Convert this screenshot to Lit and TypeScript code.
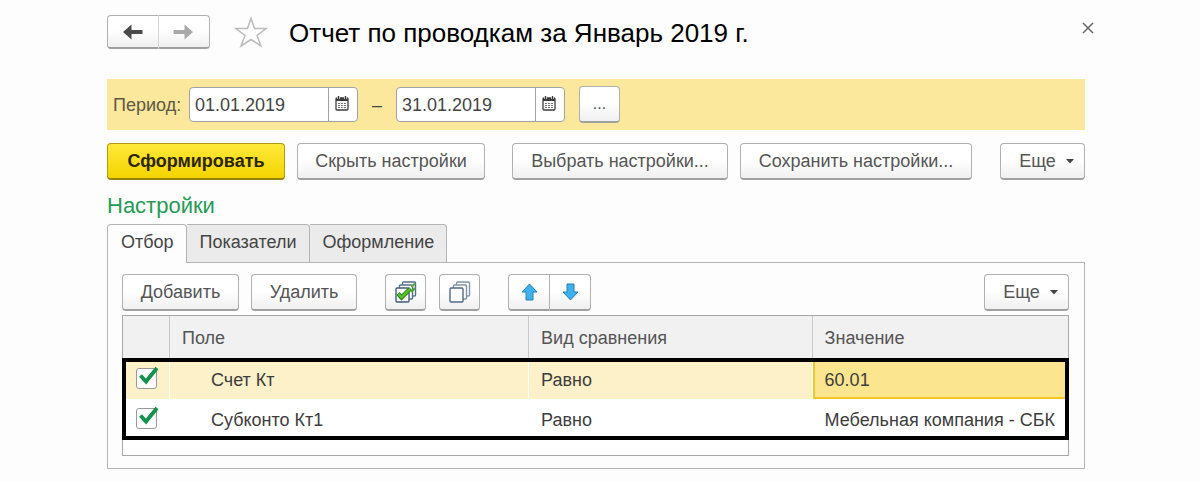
import { LitElement, html, svg, css } from "lit";
import { customElement, property, state } from "lit/decorators.js";
import { classMap } from "lit/directives/class-map.js";

const controls = css`
  * { box-sizing: border-box; }
  button {
    display: inline-flex;
    align-items: center;
    justify-content: center;
    height: 37px;
    margin: 0;
    padding: 0 18px;
    font: 18px/24px "Liberation Sans", Arial, sans-serif;
    color: #555;
    white-space: nowrap;
    background: linear-gradient(#fff 45%, #f0f0f0);
    border: 1px solid #b0b0b0;
    border-bottom: 2px solid #a0a0a0;
    border-radius: 4px;
    cursor: pointer;
  }
  svg { display: block; flex: none; }
`;

@customElement("date-field")
export class DateField extends LitElement {
  @property() value = "";
  @property() label = "";

  static styles = [controls, css`
    :host { display: block; }
    .box {
      display: flex;
      width: 169px;
      height: 35px;
      background: #fff;
      border: 1px solid #a2a2a2;
      border-radius: 4px;
      overflow: hidden;
    }
    .input {
      flex: 1;
      min-width: 0;
      padding: 0 5px;
      border: 0;
      outline: 0;
      background: none;
      color: #444;
      font: 18px/24px "Liberation Sans", Arial, sans-serif;
    }
    .pick {
      width: 29px;
      height: 100%;
      padding: 0 2px 2px 0;
      background: none;
      border: 0;
      border-left: 1px solid #a2a2a2;
      border-radius: 0;
    }
  `];

  render() {
    return html`<div class="box">
      <input class="input" type="text" aria-label=${this.label} .value=${this.value} />
      <button class="pick" aria-label="Календарь">
        <svg width="14" height="15" viewBox="0 0 14 15">
          <rect x="1" y="2" width="12" height="12" rx="1" fill="#fff" stroke="#3c3c3c" stroke-width="1.300" />
          <path d="M1 2h12v3H1Z" fill="#3c3c3c" />
          <path d="M3.500 0v3M10.500 0v3" stroke="#fff" stroke-width="2.600" />
          <path d="M3.500 0v3.500M10.500 0v3.500" stroke="#3c3c3c" stroke-width="1.400" />
          <path d="M3.200 7.500h1.500m1.500 0h1.500m1.500 0h1.500M3.200 9.500h1.500m1.500 0h1.500m1.500 0h1.500M3.200 11.500h1.500m1.500 0h1.500m1.500 0h1.500" stroke="#444" stroke-width="1.200" />
        </svg>
      </button>
    </div>`;
  }
}

interface Filter { on: boolean; field: string; kind: string; value: string; }

const sheet = (x: number, y: number, stroke: string) =>
  svg`<rect x=${x} y=${y} width="13" height="14" rx="1" fill="#fff" stroke=${stroke} stroke-width="1.400" />`;

@customElement("app-root")
export class AppRoot extends LitElement {
  @state() private tab = 0;
  @state() private filters: Filter[] = [
    { on: true, field: "Счет Кт", kind: "Равно", value: "60.01" },
    { on: true, field: "Субконто Кт1", kind: "Равно", value: "Мебельная компания - СБК" },
  ];

  static styles = [controls, css`
    :host {
      display: block;
      box-sizing: border-box;
      min-height: 100vh;
      padding: 15px 115px 12px 107px;
      background: #fdfdfd;
      color: #444;
      font: 18px/24px "Liberation Sans", Arial, sans-serif;
    }
    .head { display: flex; align-items: center; height: 34px; }
    .pair { display: flex; }
    .pair button { padding: 0; width: 42px; }
    .pair button:first-child { width: 41px; border-radius: 4px 0 0 4px; border-right: 0; }
    .pair button:last-child { border-radius: 0 4px 4px 0; }
    .nav button:first-child { width: 51px; height: 34px; }
    .nav button:last-child { width: 52px; height: 34px; padding-right: 2px; border-left-color: #d5d5d5; }
    .star { width: 34px; height: 34px; padding: 0; margin: 0 21px 0 24px; border: 0; background: none; }
    .title { margin: 0; flex: 1; font-size: 26px; line-height: 32px; font-weight: 400; color: #000; padding-top: 2px; }
    .close { width: 20px; height: 20px; padding: 0; margin: -8px -13px 0 0; border: 0; background: none; }
    .period {
      display: flex;
      align-items: center;
      height: 51px;
      margin-top: 30px;
      padding-left: 6px;
      background: #fbe89c;
    }
    .caption { width: 76px; color: #5d5846; }
    .dash { width: 38px; text-align: center; }
    .dots { width: 41px; padding: 0; margin-left: 14px; font-size: 16px; }
    .actions { display: flex; margin-top: 13px; }
    .main {
      width: 178px;
      padding: 0;
      margin-right: 12px;
      color: #2b2600;
      font-weight: 700;
      background: linear-gradient(#ffe93a, #f3d400);
      border-color: #b09a10;
      border-bottom-color: #94820c;
    }
    .hide { width: 188px; padding: 0; margin-right: 27px; }
    .choose { width: 216px; padding: 0; margin-right: 12px; }
    .save { width: 232px; padding: 0; }
    .more { width: 85px; padding: 0 0 0 8px; margin-left: auto; gap: 10px; }
    .subhead { margin: 13px 0 5px; font-size: 22px; line-height: 26px; font-weight: 400; color: #259b56; }
    .tabs { display: flex; }
    .tab {
      height: 38px;
      padding: 0 12px 3px 13px;
      color: #444;
      background: #ebebeb;
      border: 1px solid #b4b4b4;
      border-left-width: 0;
      border-radius: 0 4px 0 0;
      border-bottom: 0;
    }
    .tab:first-child { border-left-width: 1px; border-radius: 4px 4px 0 0; }
    .tab.on { background: #fdfdfd; height: 39px; padding-bottom: 4px; margin-bottom: -1px; position: relative; }
    .panel { padding: 11px 15px 12px 14px; border: 1px solid #b4b4b4; }
    .tools { display: flex; margin-bottom: 4px; }
    .add { width: 117px; padding: 0; margin-right: 12px; }
    .remove { width: 106px; padding: 0; margin-right: 28px; }
    .icon { width: 41px; padding: 0; margin-right: 13px; }
    .icon.last { margin-right: 28px; }
    .grid { padding-bottom: 16px; border: 1px solid #a8a8a8; background: #fff; }
    table { width: 100%; table-layout: fixed; border-collapse: separate; border-spacing: 0; }
    .c0 { width: 47px; }
    .c1 { width: 38%; }
    .c2 { width: 30%; }
    th {
      height: 43px;
      padding: 0 0 0 12px;
      text-align: left;
      font-weight: 400;
      color: #555;
      background: #f1f1f1;
      border-right: 1px solid #c8c8c8;
    }
    th:last-child { border-right: 0; }
    tbody { outline: 4px solid #000; outline-offset: -3px; }
    td { height: 40px; padding: 1px 0 0 12px; white-space: nowrap; color: #3d3d3d; }
    td:nth-child(2) { padding-left: 41px; }
    td:first-child { padding: 0 0 2px 13px; }
    .picked td { background: #fcf1c8; border-right: 1px solid #fff; }
    .picked td:last-child { background: #fbe58f; border: 2px solid #f3c623; padding-left: 10px; }
    .check { position: relative; display: block; width: 21px; height: 21px; }
    .check input {
      appearance: none;
      display: block;
      width: 21px;
      height: 21px;
      margin: 0;
      background: #fff;
      border: 1px solid #999;
      border-radius: 3px;
    }
    .check svg { position: absolute; left: 3px; top: -2px; pointer-events: none; }
  `];

  private toggle(i: number) {
    this.filters = this.filters.map((f, n) => (n === i ? { ...f, on: !f.on } : f));
  }

  private setAll(on: boolean) {
    this.filters = this.filters.map((f) => ({ ...f, on }));
  }

  private more() {
    return html`<button class="more">Еще
      <svg width="8" height="5" viewBox="0 0 8 5"><path d="M0 0h8L4 4.500Z" fill="#444" /></svg>
    </button>`;
  }

  render() {
    return html`
      <header class="head">
        <div class="pair nav">
          <button aria-label="Назад">
            <svg width="20" height="16" viewBox="0 0 20 16"><path d="M0 8 8.500 .5V6H19.500v4H8.500V15.500Z" fill="#4a4a4a" /></svg>
          </button>
          <button aria-label="Вперед">
            <svg width="20" height="16" viewBox="0 0 20 16"><path d="M20 8 11.500 .5V6H.5v4H11.500V15.500Z" fill="#a9a9a9" /></svg>
          </button>
        </div>
        <button class="star" aria-label="В избранное">
          <svg width="34" height="32" viewBox="0 0 34 32"><path d="M17 2.500 20.500 12.500H32L23 19.500 27 30 17 23.500 7 30 11 19.500 2 12.500H13.500Z" fill="#fff" stroke="#bcbcbc" stroke-width="1.500" /></svg>
        </button>
        <h1 class="title">Отчет по проводкам за Январь 2019 г.</h1>
        <button class="close" aria-label="Закрыть">
          <svg width="12" height="12" viewBox="0 0 12 12"><path d="M1 1l10 10M11 1 1 11" stroke="#666" stroke-width="1.500" /></svg>
        </button>
      </header>

      <div class="period">
        <span class="caption">Период:</span>
        <date-field label="Начало периода" value="01.01.2019"></date-field>
        <span class="dash">–</span>
        <date-field label="Конец периода" value="31.01.2019"></date-field>
        <button class="dots">...</button>
      </div>

      <div class="actions">
        <button class="main">Сформировать</button>
        <button class="hide">Скрыть настройки</button>
        <button class="choose">Выбрать настройки...</button>
        <button class="save">Сохранить настройки...</button>
        ${this.more()}
      </div>

      <h2 class="subhead">Настройки</h2>
      <div class="tabs" role="tablist">
        ${["Отбор", "Показатели", "Оформление"].map((name, i) => html`
          <button role="tab" aria-selected=${i === this.tab}
            class=${classMap({ tab: true, on: i === this.tab })}
            @click=${() => (this.tab = i)}>${name}</button>`)}
      </div>
      <section class="panel">
        <div class="tools">
          <button class="add">Добавить</button>
          <button class="remove">Удалить</button>
          <button class="icon" aria-label="Установить флажки" @click=${() => this.setAll(true)}>
            <svg width="22" height="22" viewBox="0 0 22 22">
              ${sheet(7.5, 1, "#54708c")}${sheet(4.5, 4, "#54708c")}${sheet(1, 7, "#3f5c7d")}
              <path d="M16.500 6 20 2.500M16.500 11l3.500-4" stroke="#52a82a" stroke-width="2" />
              <path d="M3 12.500 6.500 16.500 15.500 7.500" fill="none" stroke="#2c8a17" stroke-width="4.400" />
              <path d="M3.500 13 6.500 16.200 15 8" fill="none" stroke="#5cc42c" stroke-width="2.200" />
            </svg>
          </button>
          <button class="icon last" aria-label="Снять флажки" @click=${() => this.setAll(false)}>
            <svg width="22" height="22" viewBox="0 0 22 22">
              ${sheet(7.5, 1, "#8294a8")}${sheet(4.5, 4, "#8294a8")}${sheet(1, 7, "#4f6a88")}
            </svg>
          </button>
          <div class="pair">
            <button aria-label="Вверх">
              <svg width="17" height="18" viewBox="0 0 17 18"><path d="M8.500 1 16 9h-4v8H5V9H1Z" fill="#3fb0ee" stroke="#2581b5" /></svg>
            </button>
            <button aria-label="Вниз">
              <svg width="17" height="18" viewBox="0 0 17 18"><path d="M8.500 17 16 9h-4V1H5v8H1Z" fill="#3fb0ee" stroke="#2581b5" /></svg>
            </button>
          </div>
          ${this.more()}
        </div>
        <div class="grid">
          <table>
            <colgroup><col class="c0" /><col class="c1" /><col class="c2" /><col /></colgroup>
            <thead><tr><th></th><th>Поле</th><th>Вид сравнения</th><th>Значение</th></tr></thead>
            <tbody>
              ${this.filters.map((f, i) => html`
                <tr class=${classMap({ picked: i === 0 })}>
                  <td>
                    <label class="check">
                      <input type="checkbox" aria-label=${f.field} .checked=${f.on} @change=${() => this.toggle(i)} />
                      ${f.on ? html`<svg width="20" height="20" viewBox="0 0 20 20"><path d="M1.500 9.500 7 15.500 18 2" fill="none" stroke="#12924a" stroke-width="3.800" /></svg>` : ""}
                    </label>
                  </td>
                  <td>${f.field}</td>
                  <td>${f.kind}</td>
                  <td>${f.value}</td>
                </tr>`)}
            </tbody>
          </table>
        </div>
      </section>
    `;
  }
}
